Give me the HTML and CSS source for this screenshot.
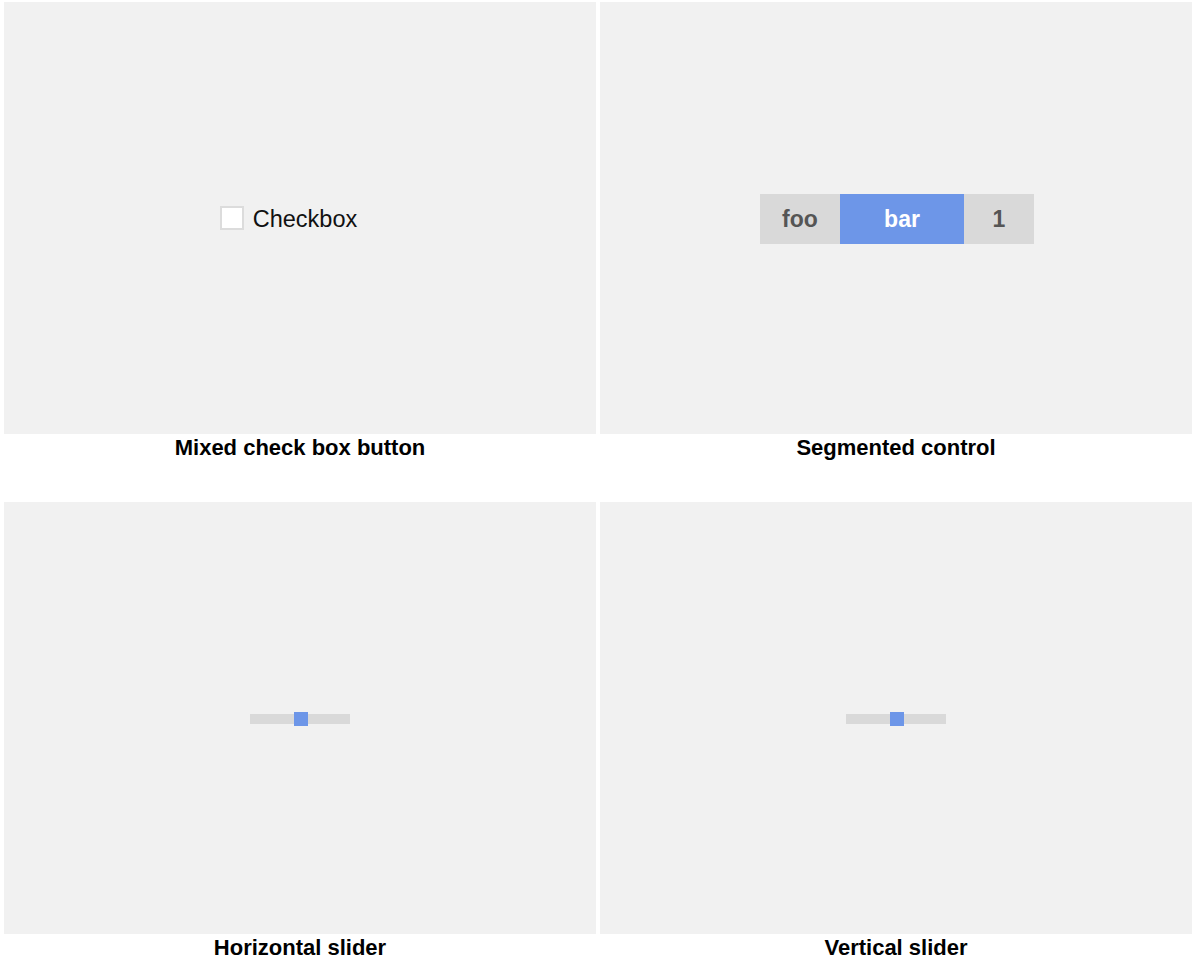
FILE: index.html
```html
<!DOCTYPE html>
<html lang="en">
<head>
<meta charset="utf-8">
<title>Controls</title>
<link rel="stylesheet" href="styles.css">
</head>
<body>
<div class="grid">
  <div class="cell">
    <div class="panel">
      <label class="check">
        <span class="box"></span>
        <span class="check-text">Checkbox</span>
      </label>
    </div>
    <div class="caption">Mixed check box button</div>
  </div>
  <div class="cell">
    <div class="panel">
      <div class="segmented">
        <span class="seg seg-foo">foo</span>
        <span class="seg seg-bar selected">bar</span>
        <span class="seg seg-one">1</span>
      </div>
    </div>
    <div class="caption">Segmented control</div>
  </div>
  <div class="cell">
    <div class="panel">
      <div class="slider">
        <span class="thumb"></span>
      </div>
    </div>
    <div class="caption">Horizontal slider</div>
  </div>
  <div class="cell">
    <div class="panel">
      <div class="slider">
        <span class="thumb"></span>
      </div>
    </div>
    <div class="caption">Vertical slider</div>
  </div>
</div>
</body>
</html>
```

FILE: styles.css
```css
html, body {
  margin: 0;
  padding: 0;
  background: #ffffff;
  font-family: "Liberation Sans", Arial, sans-serif;
  overflow: hidden;
}

.grid {
  display: grid;
  grid-template-columns: 592px 592px;
  column-gap: 4px;
  padding: 2px 4px 0 4px;
}

.cell {
  display: flex;
  flex-direction: column;
  height: 500px;
}

.panel {
  box-sizing: border-box;
  height: 432px;
  padding-top: 2px;
  background: #f1f1f1;
  display: flex;
  align-items: center;
  justify-content: center;
}

.caption {
  text-align: center;
  font-weight: bold;
  font-size: 22px;
  line-height: 28px;
  color: #000;
}

/* checkbox */
.check {
  display: flex;
  align-items: center;
  gap: 9px;
  margin-right: 23px;
  margin-top: -2px;
}

.box {
  width: 20px;
  height: 20px;
  border: 2px solid #dcdcdc;
  background: #ffffff;
}

.check-text {
  font-size: 23.5px;
  color: #111;
  line-height: 26px;
  margin-top: 2px;
}

/* segmented */
.segmented {
  display: flex;
  height: 50px;
  margin-left: 2px;
}

.seg {
  display: flex;
  align-items: center;
  justify-content: center;
  background: #d9d9d9;
  color: #555555;
  font-weight: bold;
  font-size: 23px;
}

.seg-foo { width: 80px; }
.seg-bar { width: 124px; }
.seg-one { width: 70px; }

.seg.selected {
  background: #6d96e8;
  color: #ffffff;
}

/* slider */
.slider {
  position: relative;
  width: 100px;
  height: 10px;
  background: #d9d9d9;
}

.thumb {
  position: absolute;
  left: 44px;
  top: -2px;
  width: 14px;
  height: 14px;
  background: #6d96e8;
}
```
